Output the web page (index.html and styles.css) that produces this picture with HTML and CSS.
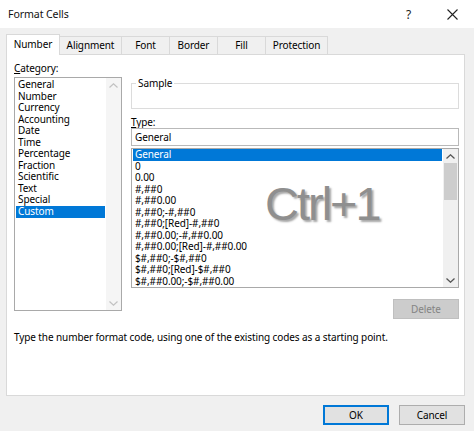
FILE: index.html
```html
<!DOCTYPE html>
<html>
<head>
<meta charset="utf-8">
<link rel="stylesheet" href="styles.css">
</head>
<body>
<div class="window">
  <div class="titlebar">
    <span class="title">Format Cells</span>
    <span class="tb-help">?</span>
    <span class="tb-close"><svg width="11" height="11" viewBox="0 0 11 11"><path d="M0.5 0.5 L10.5 10.5 M10.5 0.5 L0.5 10.5" stroke="#222" stroke-width="1.1" fill="none"/></svg></span>
  </div>
  <div class="body">
    <div class="tabs">
      <div class="tab active t-number">Number</div>
      <div class="tab t-align">Alignment</div>
      <div class="tab t-font">Font</div>
      <div class="tab t-border">Border</div>
      <div class="tab t-fill">Fill</div>
      <div class="tab t-prot">Protection</div>
    </div>
    <div class="panel">
      <div class="cols">
        <div class="leftcol">
          <div class="label"><u>C</u>ategory:</div>
          <div class="listbox cat">
            <div class="items">
              <div class="item">General</div>
              <div class="item">Number</div>
              <div class="item">Currency</div>
              <div class="item">Accounting</div>
              <div class="item">Date</div>
              <div class="item">Time</div>
              <div class="item">Percentage</div>
              <div class="item">Fraction</div>
              <div class="item">Scientific</div>
              <div class="item">Text</div>
              <div class="item">Special</div>
              <div class="item sel">Custom</div>
            </div>
            <div class="sbar disabled">
              <div class="arrow"><svg width="9" height="5" viewBox="0 0 9 5"><path d="M0.5 4.5 L4.5 0.8 L8.5 4.5" stroke="#c2c2c2" stroke-width="1.2" fill="none"/></svg></div>
              <div class="track"></div>
              <div class="arrow"><svg width="9" height="5" viewBox="0 0 9 5"><path d="M0.5 0.5 L4.5 4.2 L8.5 0.5" stroke="#c2c2c2" stroke-width="1.2" fill="none"/></svg></div>
            </div>
          </div>
        </div>
        <div class="rightcol">
          <fieldset class="sample">
            <legend>Sample</legend>
            <div class="sample-body"></div>
          </fieldset>
          <div class="label type-label"><u>T</u>ype:</div>
          <div class="textbox">General</div>
          <div class="listbox fmt">
            <div class="items">
              <div class="item sel">General</div>
              <div class="item">0</div>
              <div class="item">0.00</div>
              <div class="item">#,##0</div>
              <div class="item">#,##0.00</div>
              <div class="item">#,##0;-#,##0</div>
              <div class="item">#,##0;[Red]-#,##0</div>
              <div class="item">#,##0.00;-#,##0.00</div>
              <div class="item">#,##0.00;[Red]-#,##0.00</div>
              <div class="item">$#,##0;-$#,##0</div>
              <div class="item">$#,##0;[Red]-$#,##0</div>
              <div class="item">$#,##0.00;-$#,##0.00</div>
            </div>
            <div class="sbar">
              <div class="arrow"><svg width="9" height="5" viewBox="0 0 9 5"><path d="M0.5 4.5 L4.5 0.8 L8.5 4.5" stroke="#555" stroke-width="1.3" fill="none"/></svg></div>
              <div class="track"><div class="thumb"></div></div>
              <div class="arrow"><svg width="9" height="5" viewBox="0 0 9 5"><path d="M0.5 0.5 L4.5 4.2 L8.5 0.5" stroke="#555" stroke-width="1.3" fill="none"/></svg></div>
            </div>
            <div class="watermark">Ctrl+1</div>
          </div>
          <div class="btnrow">
            <div class="btn delete">Delete</div>
          </div>
        </div>
      </div>
      <div class="desc">Type the number format code, using one of the existing codes as a starting point.</div>
    </div>
    <div class="footer">
      <div class="btn ok">OK</div>
      <div class="btn cancel">Cancel</div>
    </div>
  </div>
</div>
</body>
</html>
```
FILE: styles.css
```css
html, body {
  margin: 0;
  padding: 0;
}
body {
  width: 474px;
  height: 431px;
  overflow: hidden;
  background: #f0f0f0;
  font-family: "Noto Sans", "Open Sans", sans-serif;
  font-size: 10px;
  letter-spacing: -0.1px;
  color: #000;
}
.window {
  width: 474px;
  height: 431px;
  display: flex;
  flex-direction: column;
}
.titlebar {
  height: 28px;
  background: #ffffff;
  display: flex;
  align-items: center;
  padding-left: 8px;
  box-sizing: border-box;
}
.title {
  font-size: 10.6px;
  flex: 1;
  color: #111;
}
.tb-help {
  font-size: 12px;
  width: 12px;
  margin-right: 29px;
  color: #222;
}
.tb-close {
  display: flex;
  margin-right: 16px;
}
.body {
  flex: 1;
  padding: 6px 9px 0 6px;
  display: flex;
  flex-direction: column;
}
.tabs {
  display: flex;
  align-items: flex-end;
  height: 20px;
  position: relative;
  z-index: 1;
}
.tab {
  box-sizing: border-box;
  height: 18px;
  border: 1px solid #d9d9d9;
  border-bottom: none;
  border-left: none;
  text-align: center;
  line-height: 17px;
  background: #f0f0f0;
}
.tab.active {
  background: #ffffff;
  border-left: 1px solid #d9d9d9;
  line-height: 19px;
  margin-bottom: -1px;
  height: 21px;
}
.t-number { width: 54px; }
.t-align { width: 62px; }
.t-font { width: 48px; }
.t-border { width: 48px; }
.t-fill { width: 48px; }
.t-prot { width: 62px; }

.panel {
  box-sizing: border-box;
  width: 459px;
  height: 342px;
  background: #ffffff;
  border: 1px solid #d9d9d9;
  padding: 6px 0 0 7px;
}
.cols {
  display: flex;
  gap: 9px;
}
.leftcol {
  width: 108px;
}
.rightcol {
  width: 328px;
  display: flex;
  flex-direction: column;
}
.label {
  height: 16px;
  line-height: 14px;
}
.listbox {
  box-sizing: border-box;
  border: 1px solid #a9a9a9;
  display: flex;
  background: #fff;
  position: relative;
}
.cat {
  height: 234px;
}
.items {
  flex: 1;
  padding: 1px;
  overflow: hidden;
}
.item {
  height: 11.55px;
  line-height: 11.55px;
  padding-left: 2px;
  white-space: nowrap;
}
.item.sel {
  background: #0078d7;
  color: #ffffff;
}
.sbar {
  width: 15px;
  display: flex;
  flex-direction: column;
  background: #f0f0f0;
}
.sbar.disabled {
  background: #f5f5f5;
}
.arrow {
  height: 14px;
  display: flex;
  align-items: center;
  justify-content: center;
}
.track {
  flex: 1;
}
.thumb {
  height: 37px;
  margin: 0 1px;
  background: #cdcdcd;
}
.sample {
  margin: 16px 0 0 0;
  padding: 0 5px;
  border: 1px solid #dcdcdc;
  min-width: 0;
}
.sample legend {
  padding: 0 2px;
  line-height: 12px;
  margin-left: -1px;
}
.sample-body {
  height: 19px;
}
.type-label {
  margin-top: 7px;
  height: 12px;
  line-height: 12px;
}
.textbox {
  box-sizing: border-box;
  height: 18px;
  border: 1px solid #b9b9b9;
  padding-left: 3px;
  line-height: 16px;
}
.fmt {
  margin-top: 2px;
  height: 140px;
}
.fmt .items {
  padding: 0 1px;
}
.fmt .item {
  height: 11.5px;
  line-height: 11.5px;
  padding-left: 2px;
}
.watermark {
  position: absolute;
  left: 133px;
  top: 30px;
  font-family: "Liberation Sans", Arial, sans-serif;
  font-size: 47px;
  letter-spacing: -2px;
  color: #8f8f8f;
  text-shadow: 2px 2px 2px rgba(0, 0, 0, 0.35);
  line-height: 50px;
  pointer-events: none;
}
.btnrow {
  display: flex;
  justify-content: flex-end;
  margin-top: 11px;
}
.btn {
  box-sizing: border-box;
  width: 66px;
  height: 20px;
  background: #e1e1e1;
  border: 1px solid #adadad;
  text-align: center;
  line-height: 18px;
}
.delete {
  background: #cccccc;
  border-color: #bfbfbf;
  color: #848484;
}
.desc {
  margin-top: 12px;
  line-height: 12px;
}
.footer {
  display: flex;
  justify-content: flex-end;
  gap: 10px;
  margin-top: 9px;
}
.ok {
  border: 2px solid #0078d7;
  line-height: 16px;
}
```
